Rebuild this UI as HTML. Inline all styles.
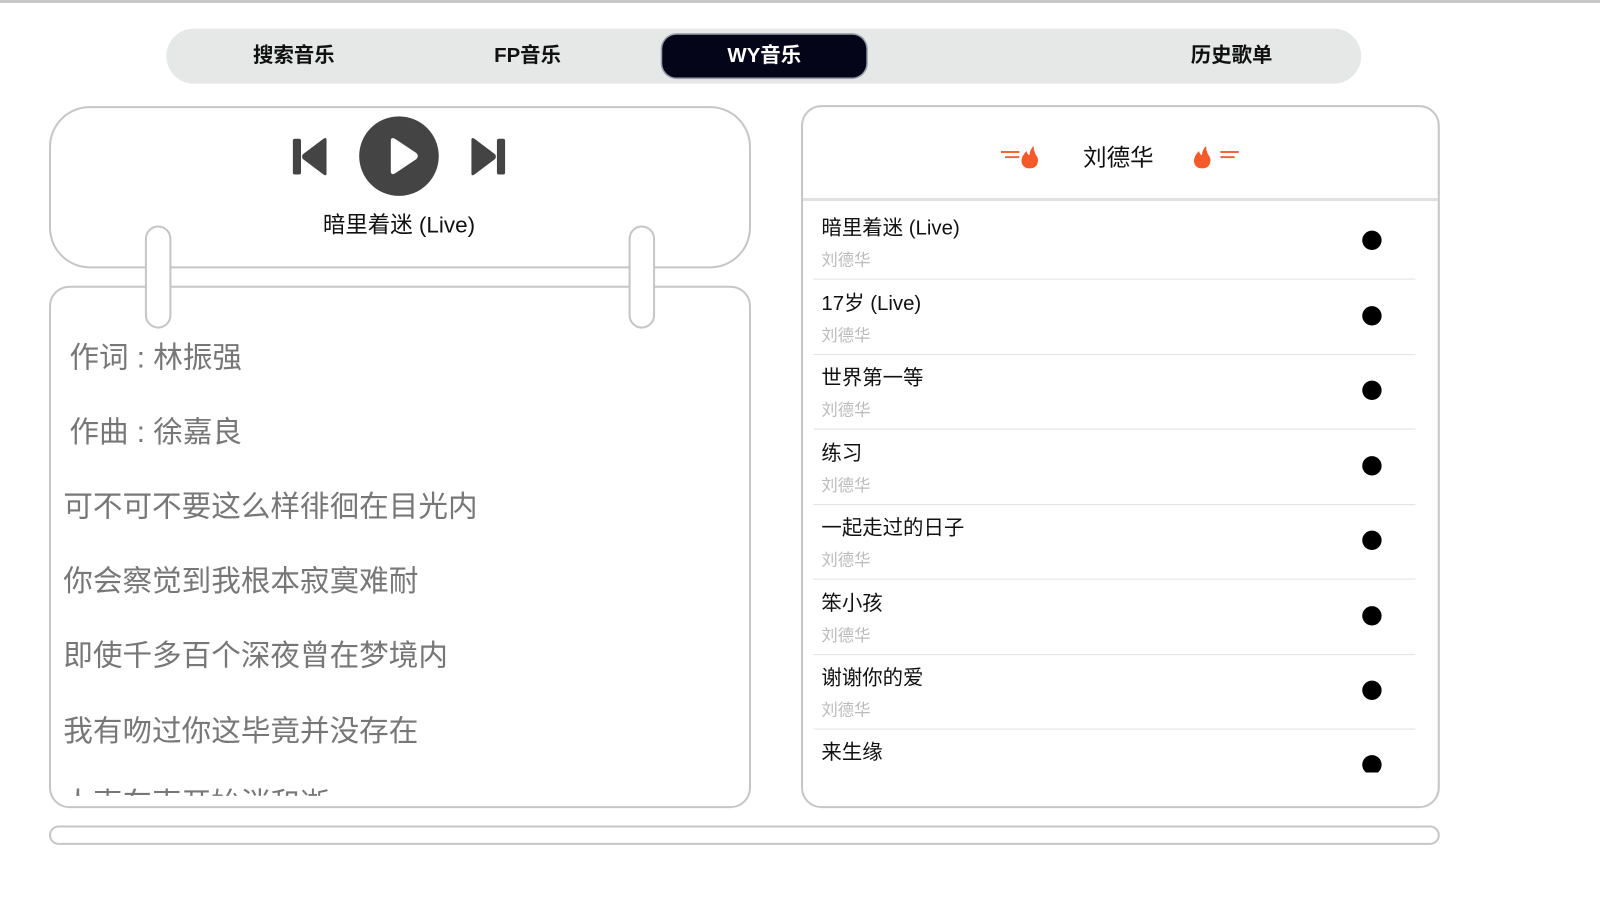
<!DOCTYPE html>
<html><head><meta charset="utf-8"><style>
*{margin:0;padding:0;box-sizing:border-box}
body{width:1600px;height:900px;background:#fff;font-family:"Liberation Sans","Noto Sans CJK SC",sans-serif;position:relative;overflow:hidden}
#w{position:absolute;left:0;top:0;width:1568px;height:882px;transform:scale(1.0204);transform-origin:0 0}
.topline{position:absolute;left:0;top:0;width:1600px;height:3px;background:#c8c8c8}
.nav{position:absolute;left:163px;top:28px;width:1171px;height:54px;background:#e6e8e8;border-radius:27px}
.tab{position:absolute;top:0;height:54px;line-height:54px;font-size:20px;font-weight:bold;color:#111;transform:translateX(-50%)}
.active{position:absolute;left:486px;top:6px;width:200px;height:42px;background:#05051a;border-radius:14px;color:#fff;font-size:20px;font-weight:bold;text-align:center;line-height:42px;box-shadow:0 0 0 1.5px #9aa0ac}
.card{position:absolute;border:2px solid #c6c6c6;background:#fff}
.peg{position:absolute;width:26px;height:101px;border:2px solid #c6c6c6;border-radius:13px;background:#fff}
.lyr{position:absolute;font-size:29px;color:#777;white-space:nowrap}
.row{position:absolute;left:0;width:625px;height:73px}
.row .t{position:absolute;left:18px;top:6px;font-size:20px;color:#111}
.row .a{position:absolute;left:18px;top:40px;font-size:16px;color:#bbb}
.row .d{position:absolute;left:548px;top:25px;width:19px;height:19px;border-radius:50%;background:#000}
.row .s{position:absolute;left:10px;right:25px;bottom:0;height:1px;background:#e2e2e2}
</style></head><body>
<div class="topline"></div>
<div id="w">
<div class="nav">
<div class="tab" style="left:125px">搜索音乐</div>
<div class="tab" style="left:354px">FP音乐</div>
<div class="active">WY音乐</div>
<div class="tab" style="left:1044px">历史歌单</div>
</div>

<div class="card" style="left:48px;top:104px;width:688px;height:159px;border-radius:40px"></div>
<svg style="position:absolute;left:280px;top:110px" width="230" height="90" viewBox="280 110 230 90">
<rect x="287" y="136" width="8" height="35" rx="2" fill="#444"/>
<path d="M320 137 L320 170 Q320 173 317 171 L297 156 Q295 153.5 297 151 L317 136 Q320 134 320 137Z" fill="#444"/>
<circle cx="391" cy="153" r="39" fill="#444"/>
<path d="M383 138 L383 168 Q383 172 387 170 L408 156 Q411 153 408 150 L387 136 Q383 134 383 138Z" fill="#fff"/>
<rect x="487" y="136" width="8" height="35" rx="2" fill="#444"/>
<path d="M462 137 L462 170 Q462 173 465 171 L485 156 Q487 153.5 485 151 L465 136 Q462 134 462 137Z" fill="#444"/>
</svg>
<div style="position:absolute;left:241px;width:300px;top:203px;text-align:center;font-size:22px;color:#111">暗里着迷 (Live)</div>

<div class="card" style="left:48px;top:280px;width:688px;height:512px;border-radius:20px;overflow:hidden">
<div class="lyr" style="left:18px;top:45px">作词 : 林振强</div>
<div class="lyr" style="left:18px;top:118px">作曲 : 徐嘉良</div>
<div class="lyr" style="left:12px;top:191px">可不可不要这么样徘徊在目光内</div>
<div class="lyr" style="left:12px;top:264px">你会察觉到我根本寂寞难耐</div>
<div class="lyr" style="left:12px;top:337px">即使千多百个深夜曾在梦境内</div>
<div class="lyr" style="left:12px;top:411px">我有吻过你这毕竟并没存在</div>
<div style="position:absolute;left:0;top:486px;width:688px;height:12px;overflow:hidden"><div class="lyr" style="left:12px;top:-4px">人声车声开始消和逝</div></div>
</div>
<div class="peg" style="left:142px;top:221px"></div>
<div class="peg" style="left:616px;top:221px"></div>

<div class="card" style="left:785px;top:103px;width:626px;height:689px;border-radius:20px;overflow:hidden">
<div style="position:absolute;left:0;top:0;width:622px;height:92px;border-bottom:3px solid #e0e0e0"></div>
<div style="position:absolute;left:0;width:618px;top:30px;text-align:center;font-size:23px;color:#111">刘德华</div>
<svg style="position:absolute;left:190px;top:32px" width="60" height="30"><path d="M4 12 H22 M8 17 H22" stroke="#e9683a" stroke-width="2"/><path d="M32 28 Q25 28 24 21 Q24 16 29 11 Q30 15 32 15 Q32 10 36 6 Q36 12 39 16 Q41 19 40 22 Q39 28 32 28Z" fill="#f55a2a"/></svg>
<svg style="position:absolute;left:375px;top:32px" width="60" height="30"><path d="M34 12 H52 M34 17 H48" stroke="#e9683a" stroke-width="2"/><path d="M16 28 Q9 28 8 21 Q8 16 13 11 Q14 15 16 15 Q16 10 20 6 Q20 12 23 16 Q25 19 24 22 Q23 28 16 28Z" fill="#f55a2a"/></svg>
<div class="row" style="top:96px"><div class="t">暗里着迷 (Live)</div><div class="a">刘德华</div><div class="d"></div><div class="s"></div></div>
<div class="row" style="top:169.5px"><div class="t">17岁 (Live)</div><div class="a">刘德华</div><div class="d"></div><div class="s"></div></div>
<div class="row" style="top:243px"><div class="t">世界第一等</div><div class="a">刘德华</div><div class="d"></div><div class="s"></div></div>
<div class="row" style="top:316.5px"><div class="t">练习</div><div class="a">刘德华</div><div class="d"></div><div class="s"></div></div>
<div class="row" style="top:390px"><div class="t">一起走过的日子</div><div class="a">刘德华</div><div class="d"></div><div class="s"></div></div>
<div class="row" style="top:463.5px"><div class="t">笨小孩</div><div class="a">刘德华</div><div class="d"></div><div class="s"></div></div>
<div class="row" style="top:537px"><div class="t">谢谢你的爱</div><div class="a">刘德华</div><div class="d"></div><div class="s"></div></div>
<div style="position:absolute;left:0;top:610px;width:622px;height:42px;overflow:hidden"><div class="row" style="top:0"><div class="t">来生缘</div><div class="d"></div></div></div>
</div>

<div class="card" style="left:48px;top:809px;width:1363px;height:19px;border-radius:10px"></div>
</div>
</body></html>
